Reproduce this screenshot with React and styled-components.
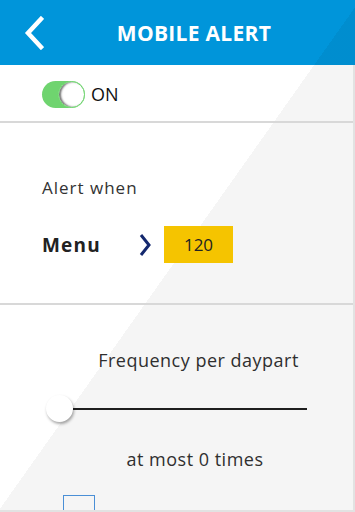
import styled, { createGlobalStyle } from "styled-components";

//global reset
const GlobalStyle = createGlobalStyle`
  html, body {
    margin: 0;
    padding: 0;
    height: 100%;
    overflow: hidden;
  }
  body {
    font-family: "Open Sans", Lato, sans-serif;
    color: #2b2b2b;
  }
`;

const Page = styled.div`
  height: 100vh;
  display: flex;
  flex-direction: column;
  background: linear-gradient(125.3deg, #ffffff 50.2%, #f5f5f5 50.2%) fixed;
`;

const Header = styled.header`
  height: 65px;
  flex-shrink: 0;
  display: flex;
  align-items: center;
  padding-left: 24px;
  background: linear-gradient(125.3deg, transparent 50.2%, rgba(0, 0, 0, 0.05) 50.2%) fixed,
    #0095da;
`;

const BackButton = styled.button`
  border: none;
  background: none;
  padding: 0;
  width: 24px;
  height: 36px;
  display: flex;
  align-items: center;
  cursor: pointer;
`;

const Title = styled.h1`
  flex: 1;
  margin: 0;
  padding-right: 15px;
  text-align: center;
  color: #fff;
  font-size: 21px;
  font-weight: 700;
  letter-spacing: 0.3px;
`;

const Content = styled.div`
  flex: 1;
  overflow: hidden;
  border-right: 2px solid #e2e2e2;
  border-bottom: 2px solid #e2e2e2;
`;

const Section = styled.section`
  height: ${(props) => props.height}px;
  border-bottom: ${(props) => (props.last ? "none" : "2px solid #d8d8d8")};
  box-sizing: border-box;
`;

const ToggleRow = styled(Section)`
  display: flex;
  align-items: center;
  gap: 6px;
  padding: 2px 0 0 42px;
`;

const Switch = styled.div`
  width: 43px;
  height: 27px;
  border-radius: 14px;
  background: #6fd46f;
  display: flex;
  justify-content: flex-end;
  box-sizing: border-box;
`;

const Knob = styled.div`
  width: 27px;
  height: 27px;
  border-radius: 50%;
  background: #fff;
  box-sizing: border-box;
  border: 1px solid #6fd46f;
  box-shadow: inset 2px 0 2px rgba(0, 0, 0, 0.55);
`;

const SwitchLabel = styled.span`
  font-size: 18px;
  color: #111;
`;

const AlertSection = styled(Section)`
  padding: 53px 0 0 42px;
`;

const Label = styled.div`
  font-size: 17px;
  color: #333;
  letter-spacing: 1px;
`;

const MenuRow = styled.div`
  display: flex;
  align-items: center;
  margin-top: 27px;
`;

const MenuName = styled.span`
  width: 96px;
  font-size: 19px;
  font-weight: 700;
  color: #222;
  letter-spacing: 1.2px;
`;

const Value = styled.div`
  margin-left: 12px;
  width: 69px;
  height: 37px;
  background: #f5c400;
  display: flex;
  align-items: center;
  justify-content: center;
  font-size: 17px;
  color: #222;
`;

const FrequencySection = styled(Section)`
  display: flex;
  flex-direction: column;
  align-items: center;
  padding-top: 43px;
`;

const CenterText = styled.div`
  font-size: 18px;
  color: #2f2f2f;
  letter-spacing: 0.5px;
  margin-top: ${(props) => props.top || 0}px;
  margin-left: ${(props) => props.shift || 0}px;
`;

const Slider = styled.div`
  align-self: stretch;
  display: flex;
  align-items: center;
  margin: 23px 46px 0 46px;
`;

const Thumb = styled.div`
  width: 27px;
  height: 27px;
  border-radius: 50%;
  background: #fff;
  box-shadow: 1px 2px 3px rgba(0, 0, 0, 0.35);
  flex-shrink: 0;
`;

const Track = styled.div`
  flex: 1;
  height: 2px;
  background: #1e1e1e;
`;

const CheckBox = styled.div`
  align-self: flex-start;
  margin: 24px 0 0 63px;
  width: 32px;
  height: 32px;
  box-sizing: border-box;
  border: 1px solid #4a8fd6;
`;

const App = () => {
  return (
    <Page>
      <GlobalStyle />
      <Header>
        <BackButton aria-label="back">
          <svg width="20" height="34" viewBox="0 0 20 34">
            <path
              d="M17 3 L4 17 L17 31"
              fill="none"
              stroke="#fff"
              strokeWidth="4.5"
              strokeLinecap="square"
            />
          </svg>
        </BackButton>
        <Title>MOBILE ALERT</Title>
      </Header>
      <Content>
        <ToggleRow height={58}>
          <Switch>
            <Knob />
          </Switch>
          <SwitchLabel>ON</SwitchLabel>
        </ToggleRow>
        <AlertSection height={182}>
          <Label>Alert when</Label>
          <MenuRow>
            <MenuName>Menu</MenuName>
            <svg width="14" height="24" viewBox="0 0 14 24">
              <path d="M3 2 L11 12 L3 22" fill="none" stroke="#14286e" strokeWidth="3" />
            </svg>
            <Value>120</Value>
          </MenuRow>
        </AlertSection>
        <FrequencySection last height={260}>
          <CenterText shift={44}>Frequency per daypart</CenterText>
          <Slider>
            <Thumb />
            <Track />
          </Slider>
          <CenterText shift={37} top={25}>at most 0 times</CenterText>
          <CheckBox />
        </FrequencySection>
      </Content>
    </Page>
  );
};

export default App;
